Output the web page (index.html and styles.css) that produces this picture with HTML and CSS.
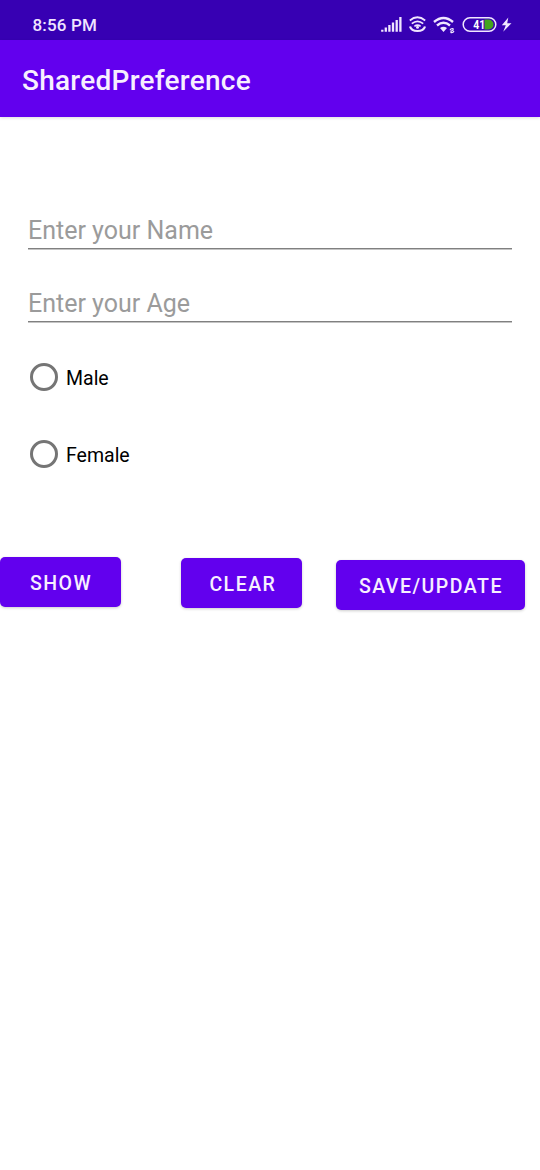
FILE: index.html
```html
<!DOCTYPE html>
<html lang="en">
<head>
<meta charset="utf-8">
<title>SharedPreference</title>
<link rel="stylesheet" href="styles.css">
</head>
<body>
<header class="status">
  <span class="clock">8:56 PM</span>
  <svg class="status-icons" width="140" height="24" viewBox="376 13 140 24" fill="none" stroke="#f0e6ff">
    <path d="M382.300 31.700v-2M385.800 31.700v-4.200M389.400 31.700v-6.700M393 31.700v-9.200M396.700 31.700v-11.700M400.400 31.700v-14.700" stroke-width="2.300"/>
    <path d="M409.800 20.500q7.500-6.500 15.400 0M411.800 23.700q5.700-4.800 11.400 0M414.400 26.300q3.100-2.400 6.200 0" stroke-width="1.700"/>
    <circle cx="417.500" cy="27.300" r="1.500" fill="#f0e6ff" stroke="none"/>
    <path d="M410 26.500q1.300 4.500 7.500 4.500t7.500-4.500" stroke-width="2.200"/>
    <path d="M434 22q9.500-8.200 19 0M437 25.500q6.500-5.500 13 0" stroke-width="2.400"/>
    <path d="M440 28q3.500-2.500 7 0l-3.500 4z" fill="#f0e6ff" stroke="none"/>
    <path d="M450 30.200q.8-2.200 3.600-1.400M454 31q-.8 2.200-3.600 1.400M450.500 31.700l3.200-2.200" stroke-width="1.100"/>
    <path d="M484.500 19.500h4a5 5 0 0 1 0 10h-4z" fill="#43a51c" stroke="none"/>
    <rect x="463.200" y="17.700" width="32.600" height="13.600" rx="6.800" stroke-width="1.500"/>
    <text x="473.200" y="29.200" class="battery" textLength="12" lengthAdjust="spacingAndGlyphs">41</text>
    <path d="M508.300 17.500l-6.500 7.800h4l-2.600 6.500 8.300-8.600h-4.300z" fill="#f0e6ff" stroke="none"/>
  </svg>
</header>
<div class="appbar"><h1>SharedPreference</h1></div>
<main>
  <form class="form">
    <input class="field" type="text" placeholder="Enter your Name">
    <input class="field" type="text" placeholder="Enter your Age">
    <div class="choices">
      <label class="choice"><input class="radio" type="radio" name="gender"><span class="choice-text">Male</span></label>
      <label class="choice"><input class="radio" type="radio" name="gender"><span class="choice-text">Female</span></label>
    </div>
  </form>
  <div class="actions">
    <button class="btn show">SHOW</button>
    <button class="btn clear">CLEAR</button>
    <button class="btn save">SAVE/UPDATE</button>
  </div>
</main>
</body>
</html>
```
FILE: styles.css
```css
* { box-sizing: border-box; }
body { margin: 0; min-height: 1170px; background: #fff; font-family: Roboto, sans-serif; }
.status { height: 40px; background: #3700b3; display: flex; justify-content: space-between; padding: 13px 24px 0 32.500px; }
.clock { color: #f0e6ff; font-size: 17px; line-height: 24px; font-weight: 500; letter-spacing: .15px; }
.battery { fill: #fff; stroke: none; font-size: 13px; font-weight: 700; }
.appbar { height: 77px; background: #6200ee; display: flex; align-items: center; padding: 4px 22px 0; box-shadow: 0 1px 3px #0002; }
h1 { margin: 0; color: #f7efff; font-size: 28px; line-height: 36px; font-weight: 500; letter-spacing: .25px; }
.form { display: flex; flex-direction: column; padding: 94px 28px 0; }
.field { height: 38px; margin: 0 0 35px; padding: 2px 0 0; border: 0; border-bottom: 1px solid #808080; border-radius: 0; box-shadow: 0 1px #c4c4c4; font: 25px Roboto, sans-serif; background: none; }
.field::placeholder { color: #9b9b9b; opacity: 1; }
.choices { display: flex; flex-direction: column; gap: 49px; padding: 6.400px 2px 0; }
.choice { display: flex; align-items: center; gap: 8px; height: 28px; font-size: 19.500px; line-height: 28px; color: #000; }
.choice-text { padding-top: 3px; }
.radio { appearance: none; width: 28px; height: 28px; margin: 0; border: 3px solid #757575; border-radius: 50%; }
.actions { display: flex; align-items: flex-start; margin-top: 88.600px; }
.btn { height: 50px; padding: 4px 0 0; border: 0; border-radius: 5px; background: #6200ee; color: #f7efff; font: 500 19.500px Roboto, sans-serif; letter-spacing: 1.500px; box-shadow: 0 1px 3px #0003; }
.show, .clear { width: 121px; }
.show { padding-left: 1px; }
.clear { margin: 1px 34px 0 60.400px; padding-left: 2px; }
.save { width: 189px; margin-top: 3px; }
```
